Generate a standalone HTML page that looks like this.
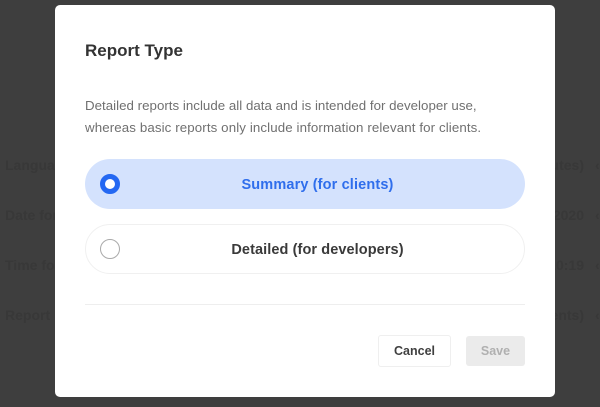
<!DOCTYPE html>
<html>
<head>
<meta charset="utf-8">
<style>
html,body{margin:0;padding:0;width:600px;height:407px;overflow:hidden;background:#3e3e3e;}
body{position:relative;font-family:"Liberation Sans",Arial,sans-serif;}
.t{position:absolute;white-space:nowrap;}
.bg{color:#383838;font-weight:bold;font-size:14px;line-height:16px;}
#modal{position:absolute;left:55px;top:5px;width:500px;height:392px;background:#fff;border-radius:5px;}
</style>
</head>
<body>
<div class="t bg" style="left:5px;top:157px;">Language</div>
<div class="t bg" style="left:5px;top:207px;">Date format</div>
<div class="t bg" style="left:5px;top:257px;">Time format</div>
<div class="t bg" style="left:5px;top:307px;">Report</div>
<div class="t bg" style="right:16px;top:157px;">(minutes)</div>
<div class="t bg" style="right:16px;top:207px;">1/1/2020</div>
<div class="t bg" style="right:16px;top:257px;">10:19</div>
<div class="t bg" style="right:16px;top:307px;">(clients)</div>
<div class="t bg" style="left:595px;top:157px;">&#8249;</div>
<div class="t bg" style="left:595px;top:207px;">&#8249;</div>
<div class="t bg" style="left:595px;top:257px;">&#8249;</div>
<div class="t bg" style="left:595px;top:307px;">&#8249;</div>

<div id="modal"></div>
<div class="t" style="left:85px;top:40px;font-size:17px;line-height:22px;font-weight:bold;color:#333;">Report Type</div>
<div class="t" style="left:85px;top:95px;font-size:13.3px;line-height:22px;color:#707070;letter-spacing:.02px;">Detailed reports include all data and is intended for developer use,</div>
<div class="t" style="left:85px;top:117px;font-size:13.3px;line-height:22px;color:#707070;letter-spacing:.11px;">whereas basic reports only include information relevant for clients.</div>

<div style="position:absolute;left:85px;top:159px;width:440px;height:50px;border-radius:25px;background:#d4e2fd;"></div>
<div style="position:absolute;left:100px;top:174px;width:20px;height:20px;border-radius:50%;background:#fff;border:5px solid #2468f2;box-sizing:border-box;"></div>
<div class="t" style="left:85px;width:465px;text-align:center;top:177px;font-size:14.5px;line-height:17px;font-weight:bold;color:#2f6eec;letter-spacing:.14px;">Summary (for clients)</div>

<div style="position:absolute;left:85px;top:224px;width:440px;height:50px;box-sizing:border-box;border-radius:25px;background:#fff;border:1px solid #f0f0f0;"></div>
<div style="position:absolute;left:100px;top:239px;width:20px;height:20px;border-radius:50%;background:#fff;border:1px solid #aaa;box-sizing:border-box;"></div>
<div class="t" style="left:85px;width:465px;text-align:center;top:242px;font-size:14.5px;line-height:17px;font-weight:bold;color:#3a3a3a;letter-spacing:.09px;">Detailed (for developers)</div>

<div style="position:absolute;left:85px;top:304px;width:440px;height:1px;background:#eeeeee;"></div>

<div class="t" style="left:378px;top:335px;width:73px;height:32px;box-sizing:border-box;border:1px solid #efefef;border-radius:3px;background:#fff;text-align:center;font-size:12.5px;line-height:30px;font-weight:bold;color:#3f3f3f;">Cancel</div>
<div class="t" style="left:466px;top:336px;width:59px;height:30px;border-radius:3px;background:#ebebeb;text-align:center;font-size:12.5px;line-height:30px;font-weight:bold;color:#b0b0b0;">Save</div>
</body>
</html>
